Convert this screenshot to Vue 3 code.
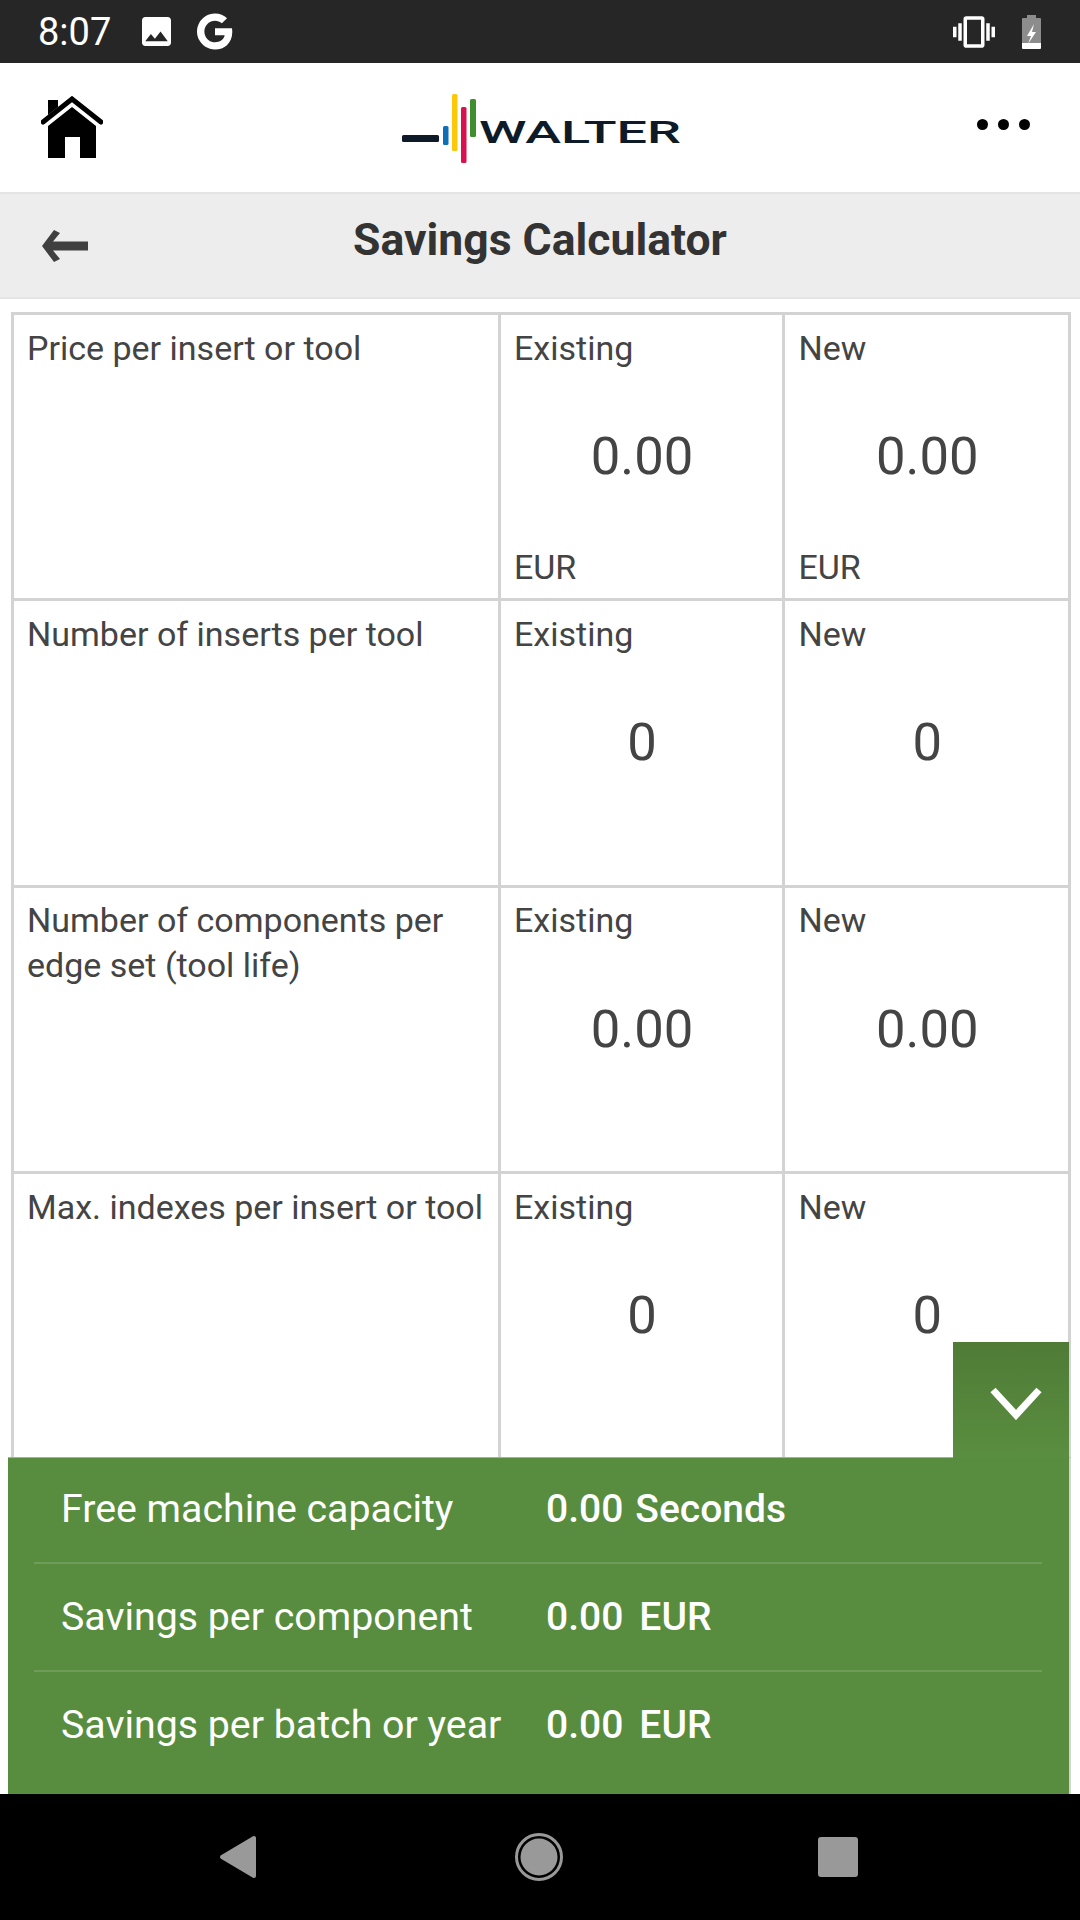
<script setup>
const rows = [
  { label: 'Price per insert or tool', value: '0.00', unit: 'EUR' },
  { label: 'Number of inserts per tool', value: '0', unit: '' },
  { label: 'Number of components per edge set (tool life)', value: '0.00', unit: '' },
  { label: 'Max. indexes per insert or tool', value: '0', unit: '' },
]

const results = [
  { label: 'Free machine capacity', value: '0.00', unit: 'Seconds', bold: true },
  { label: 'Savings per component', value: '0.00', unit: 'EUR', bold: false },
  { label: 'Savings per batch or year', value: '0.00', unit: 'EUR', bold: false },
]
</script>

<template>
  <div class="page">
    <div class="status-bar">
      <span class="time">8:07</span>
      <svg class="status-image" viewBox="3 3 18 18" fill="#fff">
        <path d="M21 19V5c0-1.1-.9-2-2-2H5c-1.1 0-2 .9-2 2v14c0 1.1.9 2 2 2h14c1.1 0 2-.9 2-2zM8.5 13.5l2.5 3.01L14.5 12l4.5 6H5l3.5-4.5z" />
      </svg>
      <svg class="status-g" viewBox="2 2 44 44" fill="#fff">
        <path d="M45.12 24.5c0-1.56-.14-3.06-.4-4.5H24v8.51h11.84c-.51 2.75-2.06 5.08-4.39 6.64v5.52h7.11c4.16-3.83 6.56-9.47 6.56-16.17z" />
        <path d="M24 46c5.94 0 10.92-1.97 14.56-5.33l-7.11-5.52c-1.97 1.32-4.49 2.1-7.45 2.1-5.73 0-10.58-3.87-12.31-9.07H4.34v5.7C7.96 41.07 15.4 46 24 46z" />
        <path d="M11.69 28.18C11.25 26.86 11 25.45 11 24s.25-2.86.69-4.18v-5.7H4.34C2.85 17.09 2 20.45 2 24c0 3.55.85 6.91 2.34 9.88l7.35-5.7z" />
        <path d="M24 10.75c3.23 0 6.13 1.11 8.41 3.29l6.31-6.31C34.91 4.18 29.93 2 24 2 15.4 2 7.96 6.93 4.34 14.12l7.35 5.7c1.73-5.2 6.58-9.07 12.31-9.07z" />
      </svg>
      <svg class="status-vibrate" viewBox="0 0 24 24" fill="#fff">
        <path d="M0 15h2V9H0v6zm3 2h2V7H3v10zm19-8v6h2V9h-2zm-3 8h2V7h-2v10zM16.5 3h-9C6.67 3 6 3.67 6 4.5v15c0 .83.67 1.5 1.5 1.5h9c.83 0 1.5-.67 1.5-1.5v-15c0-.83-.67-1.5-1.5-1.5zM16 19H8V5h8v14z" />
      </svg>
      <svg class="status-battery" viewBox="0 0 19 34">
        <path d="M5 0h9v3h4a1 1 0 0 1 1 1v24H0V4a1 1 0 0 1 1-1h4z" fill="#8c8c8c" />
        <path d="M0 28h19v5a1 1 0 0 1-1 1H1a1 1 0 0 1-1-1z" fill="#fff" />
        <polygon points="12,9 5,21 9,21 6,29 14,17 10,17" fill="#fff" />
      </svg>
    </div>

    <div class="header">
      <svg class="home" viewBox="0 0 62 64">
        <polyline points="2,26 31,3 60,26" fill="none" stroke="#000" stroke-width="5" stroke-linecap="round" />
        <polygon points="7,4 17,4 17,11 7,19" fill="#000" />
        <polygon points="31,11 55,30 55,62 39,62 39,41 24,41 24,62 7,62 7,30" fill="#000" />
      </svg>
      <svg class="logo" viewBox="0 0 280 70">
        <rect x="1" y="41" width="37" height="7" rx="1.5" fill="#0e1a27" />
        <rect x="42" y="32" width="5.5" height="19" rx="1.5" fill="#0f6fb4" />
        <rect x="51" y="0" width="5.5" height="57" rx="1.5" fill="#fcc80a" />
        <rect x="60" y="13" width="5.5" height="56" rx="1.5" fill="#d8114f" />
        <rect x="69" y="5" width="6" height="38" rx="1.5" fill="#3f8f2f" />
        <text x="78" y="49" class="logo-text" textLength="202" lengthAdjust="spacingAndGlyphs">WALTER</text>
      </svg>
      <div class="dots">
        <span></span>
        <span></span>
        <span></span>
      </div>
    </div>

    <div class="title-bar">
      <svg class="back" viewBox="0 0 46 33">
        <polygon points="0,16 12,0 18,3 11,11.5 46,11.5 46,20.5 11,20.5 18,29 12,32" fill="#404040" />
      </svg>
      <div class="title">Savings Calculator</div>
      <div></div>
    </div>

    <div class="content">
      <div class="table">
        <div v-for="row in rows" :key="row.label" class="row">
          <div class="cell label-cell">{{ row.label }}</div>
          <div class="cell input-cell first">
            <span>Existing</span>
            <span class="value">{{ row.value }}</span>
            <span class="unit">{{ row.unit }}</span>
          </div>
          <div class="cell input-cell second">
            <span>New</span>
            <span class="value">{{ row.value }}</span>
            <span class="unit">{{ row.unit }}</span>
          </div>
        </div>
      </div>
    </div>

    <div class="results">
      <div class="toggle">
        <svg viewBox="0 0 52 34" width="52" height="34">
          <polyline points="3,4 26,29 49,4" fill="none" stroke="#fff" stroke-width="7" />
        </svg>
      </div>
      <div v-for="item in results" :key="item.label" class="result-row">
        <div class="result-label">{{ item.label }}</div>
        <div class="result-value" :class="{ bold: item.bold }">
          <span>{{ item.value }}</span>
          <span class="result-unit">{{ item.unit }}</span>
        </div>
      </div>
    </div>

    <div class="nav-bar">
      <svg class="nav-back" viewBox="0 0 38 44">
        <polygon points="3,22 35,3 35,41" fill="#999" stroke="#999" stroke-width="4" stroke-linejoin="round" />
      </svg>
      <svg class="nav-home" viewBox="0 0 48 48">
        <circle cx="24" cy="24" r="22.5" fill="none" stroke="#999" stroke-width="3" />
        <circle cx="24" cy="24" r="18.5" fill="#999" />
      </svg>
      <div class="nav-square"></div>
    </div>
  </div>
</template>

<style>
html, body {
  margin: 0;
  background: #fff;
}
</style>

<style scoped>
.page {
  display: flex;
  flex-direction: column;
  width: 1080px;
  height: 1920px;
  overflow: hidden;
  font-family: Roboto, "Liberation Sans", sans-serif;
  color: #444;
  background: #fff;
}

.status-bar {
  display: flex;
  align-items: center;
  height: 63px;
  padding-left: 38px;
  background: #262626;
  color: #fff;
}

.time {
  width: 104px;
  font-size: 38px;
}

.status-image {
  width: 29px;
  height: 29px;
}

.status-g {
  width: 36px;
  height: 37px;
  margin-left: 26px;
}

.status-vibrate {
  width: 42px;
  height: 42px;
  margin-left: auto;
}

.status-battery {
  width: 19px;
  height: 34px;
  margin-left: 27px;
  margin-right: 39px;
}

.header {
  display: flex;
  align-items: center;
  height: 129px;
  padding-left: 41px;
  padding-right: 50px;
  box-sizing: border-box;
}

.home {
  width: 62px;
  height: 64px;
}

.logo {
  width: 280px;
  height: 70px;
  margin-left: 298px;
  margin-top: 3px;
}

.logo-text {
  font-family: Roboto, sans-serif;
  font-size: 31px;
  font-weight: 500;
  fill: #0e1a27;
}

.dots {
  display: flex;
  gap: 10px;
  margin-left: auto;
  margin-top: -6px;
}

.dots span {
  width: 11px;
  height: 11px;
  border-radius: 50%;
  background: #000;
}

.title-bar {
  display: grid;
  grid-template-columns: 1fr auto 1fr;
  align-items: center;
  height: 107px;
  padding-left: 42px;
  box-sizing: border-box;
  border-top: 2px solid #e4e4e4;
  border-bottom: 2px solid #e4e4e4;
  background: #ededed;
}

.back {
  width: 46px;
  height: 33px;
  margin-top: 2px;
}

.title {
  margin-left: -42px;
  margin-bottom: 12px;
  font-size: 44.5px;
  font-weight: 700;
  color: #333;
}

.content {
  flex: 1;
  min-height: 0;
  overflow: hidden;
  padding: 13px 9px 0 11px;
}

.table {
  border-top: 3px solid #d3d3d3;
  border-left: 3px solid #d3d3d3;
}

.row {
  display: grid;
  grid-template-columns: 487px 284px 286px;
  height: 286.5px;
  box-sizing: border-box;
  border-bottom: 3px solid #d3d3d3;
}

.row:first-child {
  height: 286px;
}

.cell {
  box-sizing: border-box;
  border-right: 3px solid #d3d3d3;
  font-size: 34px;
  line-height: 45px;
}

.label-cell {
  padding: 10.5px 12px 0 13px;
}

.input-cell {
  display: grid;
  grid-template-rows: 45px 1fr 45px;
  padding: 10.5px 12px 8px 13px;
}

.input-cell.second {
  padding-left: 13.5px;
}

.value {
  align-self: center;
  margin-bottom: 4px;
  text-align: center;
  font-size: 52.6px;
  line-height: 60px;
}

.unit {
  line-height: 45px;
}

.results {
  position: relative;
  display: flex;
  flex-direction: column;
  height: 337px;
  margin: 0 9px 0 8px;
  padding: 0 27px 0 26px;
  box-sizing: border-box;
  border-top: 1px solid #9db88c;
  border-right: 2px solid #d3d3d3;
  background: #588c3f;
  color: #fff;
}

.toggle {
  position: absolute;
  right: 0;
  bottom: 100%;
  display: flex;
  align-items: center;
  justify-content: center;
  width: 116px;
  height: 116px;
  background: linear-gradient(#4f7b36, #5a8e40);
}

.toggle svg {
  margin-left: 9px;
  margin-top: 5px;
}

.result-row {
  display: flex;
  align-items: center;
  height: 108px;
  padding-left: 27px;
  box-sizing: border-box;
  border-bottom: 2px solid #6f9c59;
}

.toggle + .result-row {
  margin-top: -2px;
}

.result-row:last-child {
  height: 106px;
  border-bottom: none;
}

.result-label {
  width: 485px;
  font-size: 39.3px;
}

.result-value {
  display: flex;
  gap: 16px;
  font-size: 39px;
  font-weight: 500;
}

.result-value.bold {
  gap: 12px;
}

.nav-bar {
  display: flex;
  align-items: center;
  height: 126px;
  padding-left: 219px;
  background: #000;
}

.nav-back {
  width: 38px;
  height: 44px;
}

.nav-home {
  width: 48px;
  height: 48px;
  margin-left: 258px;
}

.nav-square {
  width: 40px;
  height: 40px;
  margin-left: 255px;
  border-radius: 3px;
  background: #999;
}
</style>
